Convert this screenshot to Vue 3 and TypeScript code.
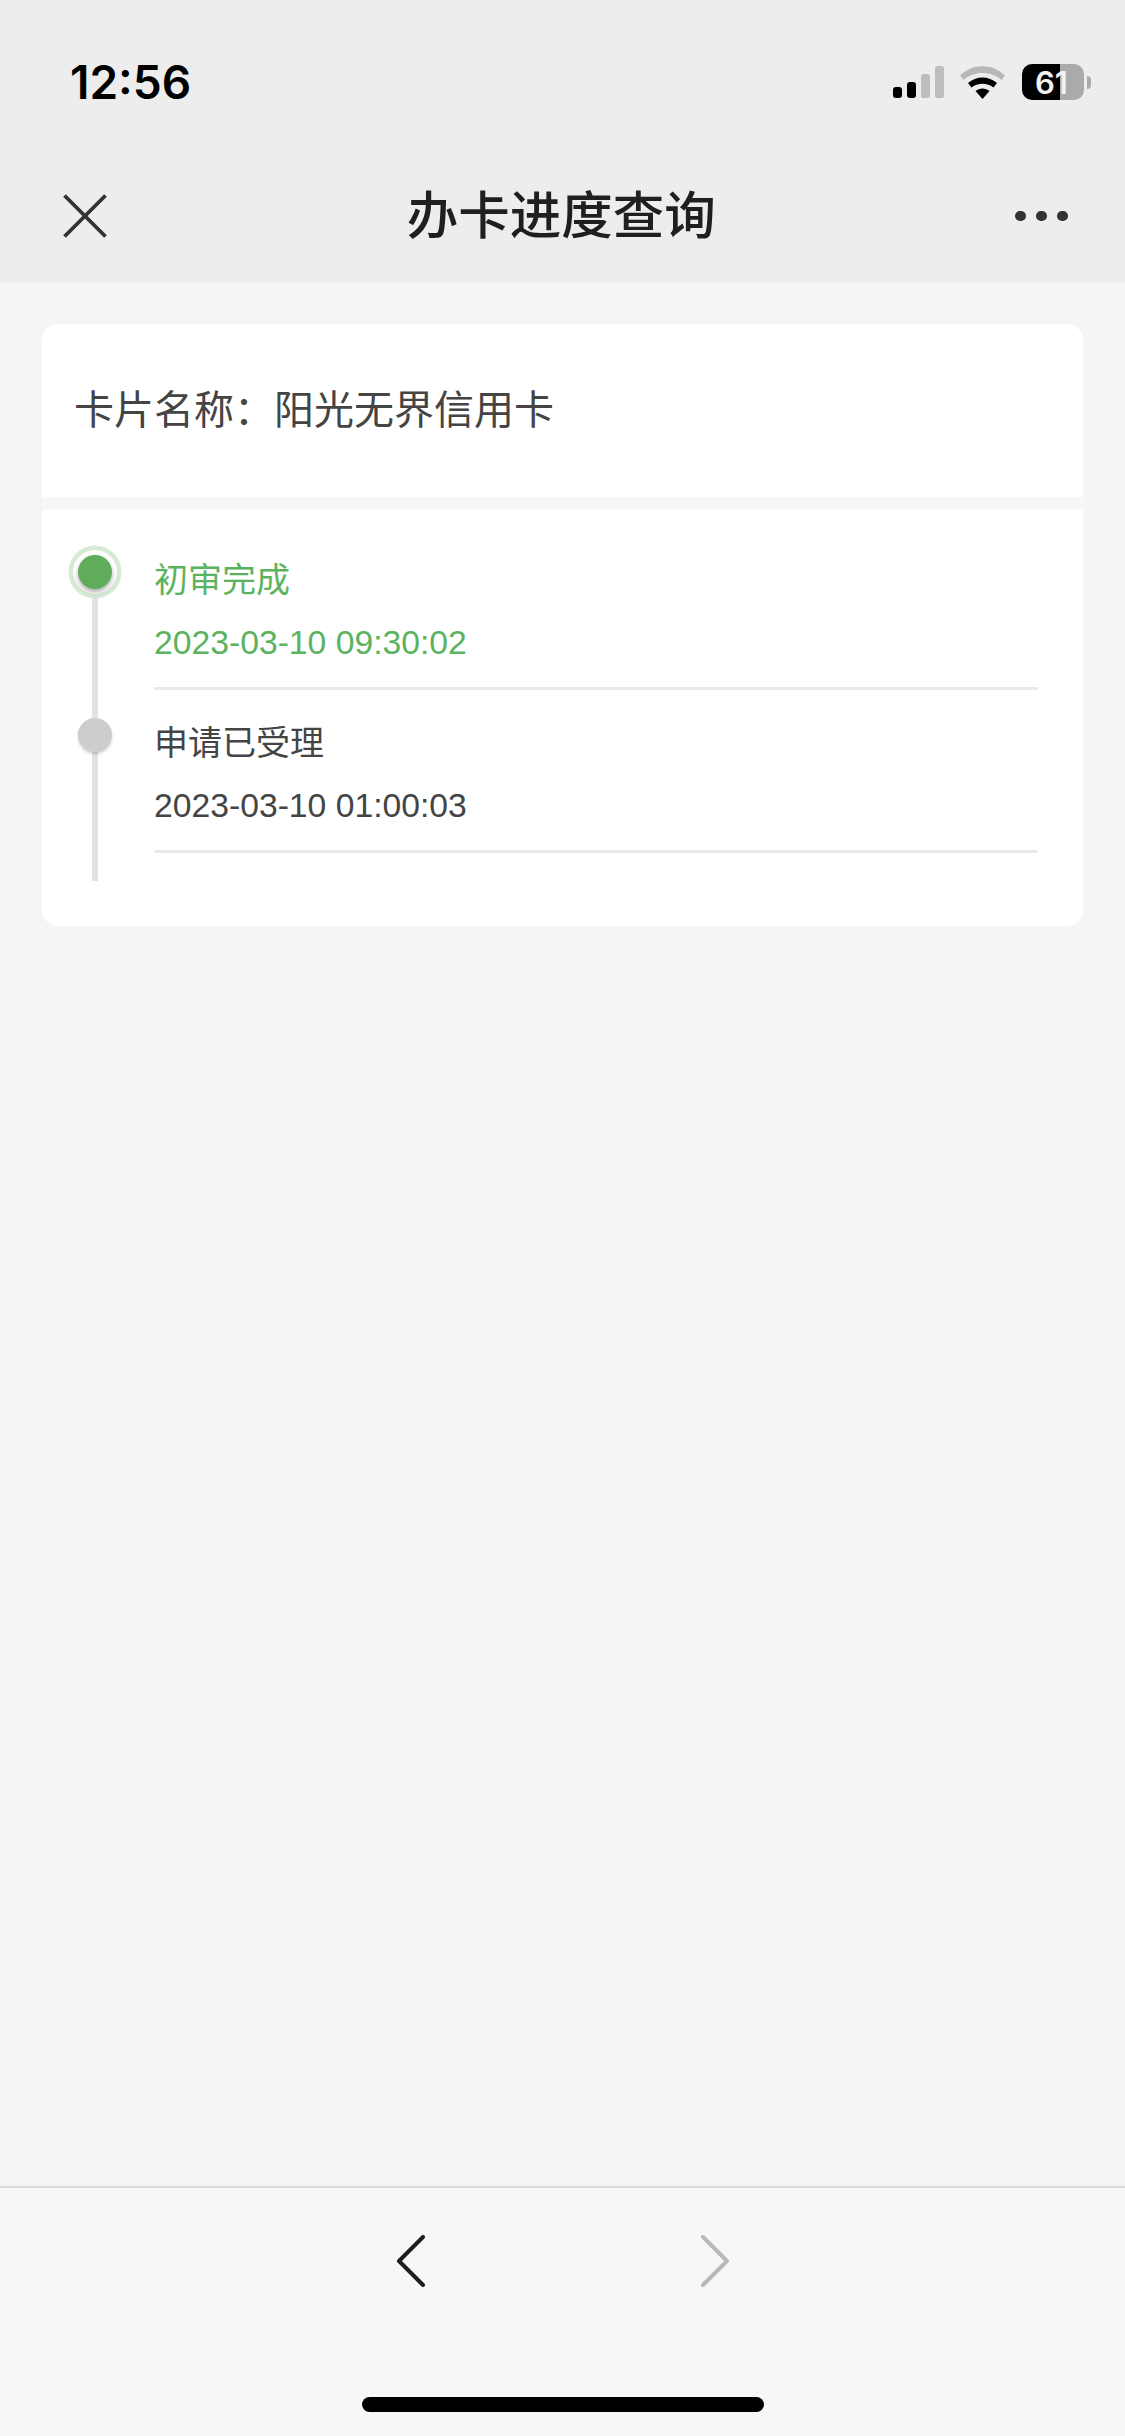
<template>
  <div class="page">
    <header class="top">
      <div class="status">
        <span class="time">12:56</span>
        <div class="status__icons">
          <svg class="signal" width="51" height="32" viewBox="0 0 51 32">
            <rect x="0" y="21" width="9" height="11" rx="3" fill="#000" />
            <rect x="14" y="16" width="9" height="16" rx="3" fill="#000" />
            <rect x="28" y="8" width="9" height="24" rx="2.5" fill="#bdbdbd" />
            <rect x="42" y="0" width="9" height="32" rx="2.5" fill="#bdbdbd" />
          </svg>
          <svg class="wifi" width="45" height="33" viewBox="0 0 45 33">
            <path d="M0 9.5C12-3 33-3 45 9.5L41.5 14C31 4.5 14 4.5 3.5 14Z" fill="#b8b8b8" />
            <path d="M8 17C16 9.5 29 9.5 37 17L33.5 21.5C27 16.5 18 16.5 11.5 21.5Z" fill="#000" />
            <path d="M15.5 25C19.5 21.5 25.5 21.5 29.5 25L22.5 33Z" fill="#000" />
          </svg>
          <div class="battery"><span>61</span></div>
          <i class="battery__nub"></i>
        </div>
      </div>
      <div class="nav">
        <svg class="nav__close" width="44" height="44" viewBox="0 0 44 44">
          <path d="M1.5 1.5L42.5 42.5M42.5 1.5L1.5 42.5" stroke="#333" stroke-width="3.8" fill="none" />
        </svg>
        <h1 class="nav__title">办卡进度查询</h1>
        <div class="nav__more"><i></i><i></i><i></i></div>
      </div>
    </header>

    <main class="main">
      <section class="card">
        <div class="card__name">卡片名称&#xFF1A;阳光无界信用卡</div>
        <div class="card__gap"></div>
        <div class="timeline">
          <div
            v-for="(step, i) in steps"
            :key="step.time"
            class="step"
            :class="{ 'is-active': step.active }"
          >
            <div class="rail">
              <span class="rail__seg" :class="{ 'is-hidden': i === 0 }"></span>
              <span class="rail__dot"></span>
              <span class="rail__line"></span>
            </div>
            <div class="step__body">
              <div class="step__title">{{ step.title }}</div>
              <div class="step__time">{{ step.time }}</div>
            </div>
          </div>
        </div>
      </section>
    </main>

    <footer class="bottom">
      <div class="bottom__arrows">
        <svg width="30" height="52" viewBox="0 0 30 52">
          <path d="M27 2L3 26L27 50" stroke="#1e1e1e" stroke-width="4" stroke-linecap="round" stroke-linejoin="round" fill="none" />
        </svg>
        <svg width="30" height="52" viewBox="0 0 30 52">
          <path d="M3 2L27 26L3 50" stroke="#b9b9b9" stroke-width="4" stroke-linecap="round" stroke-linejoin="round" fill="none" />
        </svg>
      </div>
      <div class="home"></div>
    </footer>
  </div>
</template>

<script setup lang="ts">
interface Step {
  title: string;
  time: string;
  active: boolean;
}

const steps: Step[] = [
  { title: "初审完成", time: "2023-03-10 09:30:02", active: true },
  { title: "申请已受理", time: "2023-03-10 01:00:03", active: false },
];
</script>

<style>
html,
body {
  margin: 0;
  background: #f4f5f7;
}
</style>

<style scoped>
.page {
  width: 1125px;
  height: 2436px;
  display: flex;
  flex-direction: column;
  background: #f4f5f7;
  font-family: "Liberation Sans", "Noto Sans CJK SC", sans-serif;
  overflow: hidden;
}

/* шапка */
.top {
  height: 282px;
  background: #ededed;
  flex: none;
}

.status {
  height: 150px;
  box-sizing: border-box;
  padding: 14px 34px 0 70px;
  display: flex;
  align-items: center;
  justify-content: space-between;
}

.time {
  font-family: Inter, sans-serif;
  font-size: 46px;
  font-weight: 600;
  color: #000;
}

.status__icons {
  display: flex;
  align-items: center;
}

.signal {
  margin-right: 16px;
}

.wifi {
  margin-right: 17px;
}

.battery {
  width: 62px;
  height: 36px;
  border-radius: 10px;
  background: linear-gradient(90deg, #000 0 38px, #aaa 38px 100%);
  display: flex;
  align-items: center;
  justify-content: center;
  margin-right: 3px;
}

.battery span {
  font-family: Inter, sans-serif;
  font-size: 31px;
  font-weight: 600;
  color: #f2f2f2;
  margin-right: 3px;
}

.battery__nub {
  width: 4px;
  height: 13px;
  background: #aaa;
  border-radius: 0 4px 4px 0;
}

.nav {
  height: 132px;
  display: flex;
  align-items: center;
  justify-content: space-between;
  padding: 0 57px 0 63px;
}

.nav__close {
  flex: none;
  width: 44px;
}

.nav__title {
  margin: 0 0 9px;
  font-size: 51.5px;
  font-weight: 500;
  color: #1f1f1f;
  font-family: "Noto Sans CJK SC", sans-serif;
}

.nav__more {
  display: flex;
  gap: 10.5px;
}

.nav__more i {
  width: 10.5px;
  height: 10.5px;
  border-radius: 50%;
  background: #333;
}

/* контент */
.main {
  flex: 1;
  padding: 42px 42px 0;
}

.card {
  background: #fff;
  border-radius: 16px;
  overflow: hidden;
}

.card__name {
  height: 173px;
  box-sizing: border-box;
  display: flex;
  align-items: center;
  padding: 0 32px 8px;
  font-size: 40px;
  color: #444;
  font-family: "Noto Sans CJK SC", sans-serif;
}

.card__gap {
  height: 13px;
  background: #f6f7f8;
}

.timeline {
  padding: 17px 45px 45px 36px;
}

.step {
  display: flex;
}

.rail {
  width: 34px;
  flex: none;
  margin-right: 42px;
  display: flex;
  flex-direction: column;
  align-items: center;
}

.rail__seg {
  width: 6px;
  height: 28px;
  flex: none;
  background: #e2e2e2;
}

.rail__seg.is-hidden {
  visibility: hidden;
}

.rail__dot {
  width: 34px;
  height: 34px;
  flex: none;
  border-radius: 50%;
  background: #cdcdcd;
  box-shadow: 0 2px 3px rgba(0, 0, 0, 0.18);
  position: relative;
}

.is-active .rail__dot {
  background: #5fad5a;
  box-shadow: 0 3px 5px rgba(0, 0, 0, 0.32), 0 0 0 5px #fff, 0 0 0 9.5px #d6ead6;
}

.rail__line {
  width: 6px;
  flex: 1;
  background: #e2e2e2;
}

.step__body {
  flex: 1;
  padding: 26px 0 20px;
  border-bottom: 3px solid #e9e9e9;
  color: #444;
}

.step:last-child .step__body {
  margin-bottom: 28px;
}

.is-active .step__body {
  color: #5cb35f;
}

.step__title {
  font-size: 34px;
  line-height: 50px;
  font-family: "Noto Sans CJK SC", sans-serif;
}

.step__time {
  font-size: 33.7px;
  line-height: 50px;
  margin-top: 14px;
}

/* низ */
.bottom {
  height: 250px;
  box-sizing: border-box;
  flex: none;
  background: #f7f7f7;
  border-top: 2px solid #d9d9d9;
  display: flex;
  flex-direction: column;
  align-items: center;
}

.bottom__arrows {
  display: flex;
  gap: 274px;
  margin-top: 47px;
}

.home {
  width: 402px;
  height: 15px;
  border-radius: 8px;
  background: #000;
  margin-top: 110px;
}
</style>
